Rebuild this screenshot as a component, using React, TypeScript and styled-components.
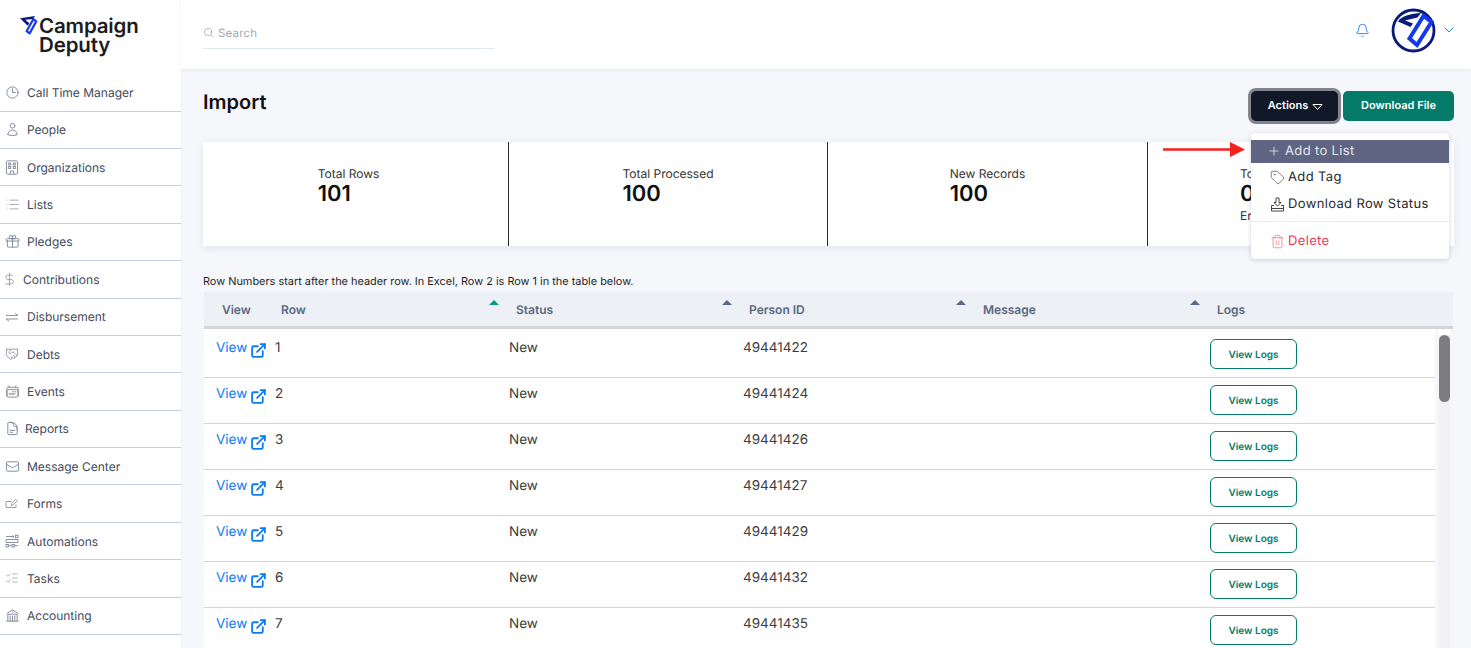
import React from "react";
import styled, { createGlobalStyle } from "styled-components";
import {
  List, DollarSign, Handshake, ListChecks, Search, Bell, ChevronDown, Plus, Tag, Trash2, ExternalLink,
} from "lucide-react";
import {
  HiOutlineClock, HiOutlineUser, HiOutlineGift, HiOutlineCalendarDays, HiOutlineDocumentText,
  HiOutlineEnvelope, HiOutlineBuildingLibrary,
} from "react-icons/hi2";

const Global = createGlobalStyle`
  html, body { margin: 0; padding: 0; height: 648px; overflow: hidden; background: #f6f7fb; }
  body { font-family: Inter, "Liberation Sans", sans-serif; color: #111827; text-rendering: geometricPrecision; }
  * { box-sizing: border-box; }
`;

const Shell = styled.div`display: flex; width: 1471px; height: 648px; overflow: hidden;`;
const Sidebar = styled.aside`width: 181px; flex: none; background: #fff; height: 648px; overflow: hidden; box-shadow: 1px 0 2px rgba(30,40,80,.04);`;
const Brand = styled.div`height: 74.2px; padding: 16px 0 0 19px; display: flex; gap: 1px; align-items: flex-start;`;
const BrandText = styled.div`font-size: 20.5px; line-height: 19px; font-weight: 600; color: #1c1c22; letter-spacing: -.15px;`;
const NavRow = styled.div<{ $gap?: number }>`
  height: 37.4px; border-bottom: 1px solid #c3d0dc; display: flex; align-items: center;
  padding-left: 5px; gap: ${p => p.$gap ?? 7}px;
  font-size: 12px; font-weight: 400; color: #3f4a5c;
  svg { flex: none; color: #7f8897; }
`;
const DollarIcon = styled(DollarSign)`margin-left: -3px;`;
const Main = styled.main`flex: 1; min-width: 0; display: flex; flex-direction: column; position: relative;`;
const Topbar = styled.header`height: 69px; flex: none; background: #fff; box-shadow: 0 1px 3px rgba(40,50,90,.07); display: flex; align-items: flex-start; justify-content: space-between; padding-right: 14px; position: relative; z-index: 1;`;
const SearchBox = styled.div`margin: 24px 0 0 22px; width: 291px; height: 25px; border-bottom: 1px solid #e1e7f0; display: flex; align-items: center; gap: 4px; padding-bottom: 7px; font-size: 11.5px; color: #a4a8b0; letter-spacing: .2px; svg { color: #8d96a3; }`;
const TopRight = styled.div`display: flex; align-items: center; height: 60px; svg { color: #2b7fef; }`;
const Avatar = styled.svg`width: 45px; height: 45px; margin: 0 5px 0 21px;`;
const Content = styled.div`padding: 0 17px 0 22px; flex: 1; position: relative;`;
const TitleRow = styled.div`display: flex; justify-content: space-between; align-items: flex-start; height: 73px;`;
const Title = styled.h1`margin: 20px 0 0 0; font-size: 20px; line-height: 26px; font-weight: 600; color: #111; `;
const Buttons = styled.div`display: flex; gap: 5px; margin-top: 22px;`;
const DarkBtn = styled.button`height: 30px; width: 87px; border: 0; padding: 0 0 2px 2px; border-radius: 5px; background: #111827; color: #fff; font: 600 11px Inter, sans-serif; text-rendering: geometricPrecision; box-shadow: 0 0 0 3px #82858e; display: flex; align-items: center; justify-content: center; gap: 4px; margin-left: 2px; svg { margin-top: 4px; }`;
const GreenBtn = styled.button`height: 30px; width: 111px; border: 0; padding: 0 0 2px; border-radius: 5px; background: #047a69; color: #fff; font: 600 11px Inter, sans-serif; text-rendering: geometricPrecision;`;
const Stats = styled.section`display: grid; grid-template-columns: 306px 319px 320px 306px; height: 104px; background: #fff; box-shadow: 0 2px 8px rgba(40,50,90,.1);`;
const Stat = styled.div<{ $edge?: boolean }>`display: flex; justify-content: center; padding-top: 24px; border-right: ${p => (p.$edge ? "0" : "1px solid #2b2b2b")};`;
const StatInner = styled.div<{ $shift: number }>`transform: translateX(${p => p.$shift}px);`;
const StatLabel = styled.div`font-size: 12px; line-height: 15px; color: #333;`;
const StatValue = styled.div`font-size: 22px; line-height: 26px; font-weight: 600; color: #111;`;
const StatFoot = styled.div`font-size: 12px; line-height: 17px; color: #333;`;
const Note = styled.p`margin: 28px 0 3px 0; font-size: 10.92px; line-height: 15px; color: #1f1f1f;`;
const TableWrap = styled.div`margin-left: 1px; width: 1249px;`;
const Head = styled.div`height: 37px; background: #edf1f6; border-bottom: 3px solid #d5d5d5; display: grid; grid-template-columns: 59px 234px 233px 234px 234px 1fr; align-items: center; font-size: 12px; font-weight: 600; color: #5a6880;`;
const HeadCell = styled.div<{ $tight?: boolean }>`padding-left: ${p => (p.$tight ? "18px" : "19px")}; position: relative;`;
const Sort = styled.span<{ $on?: boolean }>`position: absolute; right: -2px; top: -2px; width: 0; height: 0; border-left: 5px solid transparent; border-right: 5px solid transparent; border-bottom: 5px solid ${p => (p.$on ? "#0b9a83" : "#5a6880")};`;
const BodyWrap = styled.div`display: flex; position: relative; height: 400px; overflow: hidden;`;
const Rows = styled.div`width: 1231px; flex: none; padding-top: 3px; background: #fff;`;
const Row = styled.div`height: 46px; border-bottom: 1px solid #d5d5d5; display: grid; grid-template-columns: 59px 234px 234px 467px 1fr; font-size: 13.5px; color: #3c3c3c; padding-left: 12px; padding-top: 7px; background: #fff;`;
const ViewLink = styled.a`color: #0d7cf2; font-size: 13.5px; display: flex; align-items: flex-start; gap: 3px; margin-top: 1px; line-height: 17px; svg { margin-top: 2px; flex: none; }`;
const Cell = styled.div`line-height: 17px; margin-top: 1px;`;
const LogBtn = styled.button`width: 87px; height: 30px; padding: 1px 0 0; border: 1px solid #047a69; border-radius: 6px; background: #fff; color: #047a69; font: 600 10px Inter, sans-serif; text-rendering: geometricPrecision;`;
const Track = styled.div`margin: 0 0 0 4px; width: 11px; background: linear-gradient(#fff 6px, #f1f1f1 6px);`;
const Thumb = styled.div`margin-top: 6px; width: 11px; height: 67px; border-radius: 6px; background: #7d7d7d;`;
const Menu = styled.div`position: absolute; left: 1070px; top: 64px; width: 198px; height: 126px; background: #fff; border-radius: 4px; box-shadow: 0 1px 5px rgba(40,60,110,.22); padding-top: 7px; font-size: 13px; letter-spacing: .35px; color: #2a2a2a; z-index: 3;`;
const MenuItem = styled.div<{ $active?: boolean; $danger?: boolean }>`height: ${p => (p.$active ? "22.5px" : "27px")}; margin-bottom: ${p => (p.$active ? "1px" : "0")}; display: flex; align-items: center; gap: 3px; padding-left: 19px; background: ${p => (p.$active ? "#5f6483" : "transparent")}; color: ${p => (p.$active ? "#e4e6ec" : p.$danger ? "#e63a56" : "#2a2a2a")}; svg { flex: none; color: ${p => (p.$active ? "#e4e6ec" : p.$danger ? "#ea6a7e" : "#444")}; }`;
const PlusIcon = styled(Plus)`margin: 0 1px 0 -3px;`;
const MenuRule = styled.div`height: 1.5px; background: #e5e9f0; margin: 3px 0 5.5px;`;
const RedArrow = styled.svg`position: absolute; left: 982px; top: 73px; width: 82px; height: 15px;`;

const OrgIcon = () => (
  <svg width="14" height="15" viewBox="0 0 14 15" fill="none" stroke="currentColor" strokeWidth=".9">
    <rect x="1.500" y=".8" width="11" height="13.400" rx="1.200" />
    <rect x="3.700" y="3" width="2" height="2" /><rect x="8.300" y="3" width="2" height="2" />
    <rect x="3.700" y="6.500" width="2" height="2" /><rect x="8.300" y="6.500" width="2" height="2" />
    <path d="M5.300 14v-3h3.400v3" />
  </svg>
);
const SwapIcon = () => (
  <svg width="14" height="14" viewBox="0 0 14 14" fill="none" stroke="currentColor" strokeWidth=".9">
    <path d="M1 5.500h12L10 3.300" /><path d="M13 9H1l3 2.200" />
  </svg>
);
const FormIcon = () => (
  <svg width="14" height="14" viewBox="0 0 14 14" fill="none" stroke="currentColor" strokeWidth=".8">
    <path d="M7 4.500H1v6h10V7.500" /><path d="M6 8.500l.8-2 4-4.200 1.500 1.500-4 4.100z" />
  </svg>
);
const AutoIcon = () => (
  <svg width="14" height="14" viewBox="0 0 14 14" fill="none" stroke="currentColor" strokeWidth=".9">
    <path d="M1 2.500h8M7.500 1.300L9 2.500 7.500 3.700" /><rect x="10.500" y="1.300" width="2.400" height="2.400" /><path d="M13 5.500v3H1v-3z" />
    <rect x="1" y="10.500" width="2.400" height="2.400" /><path d="M3.500 11.700h3" /><rect x="7" y="10.500" width="2.400" height="2.400" /><path d="M10 11.700h3" />
  </svg>
);
const TrayDownIcon = () => (
  <svg width="15" height="15" viewBox="0 0 15 15" fill="none" stroke="currentColor" strokeWidth="1">
    <path d="M6 1h3v4.500h2L7.500 9.200 4 5.500h2z" /><path d="M4 8.500H1.500V14h12V8.500H11" /><path d="M1.500 11.500h12" />
  </svg>
);
const LogoMark = () => (
  <svg width="19" height="20" viewBox="0 0 18 20" fill="none">
    <path d="M.5 2.200 L15.500 0 L13.700 2.900 L5.800 3.800 L9.800 7.200 L8.200 9.800 Z" fill="#0a1a7a" />
    <path d="M13.800 3.200 L16.800 5.300 L10.100 17.400 L7.100 15.200 Z" stroke="#1438f0" strokeWidth="2.200" strokeLinejoin="round" />
  </svg>
);

const ic = { size: 15 };
const nav: [string, React.ReactNode, number?][] = [
  ["Call Time Manager", <HiOutlineClock {...ic} />],
  ["People", <HiOutlineUser {...ic} />],
  ["Organizations", <OrgIcon />, 8],
  ["Lists", <List size={15} strokeWidth={1.1} />],
  ["Pledges", <HiOutlineGift {...ic} />],
  ["Contributions", <DollarIcon size={15} strokeWidth={1.1} />, 6],
  ["Disbursement", <SwapIcon />, 8],
  ["Debts", <Handshake size={14} strokeWidth={1.3} />, 8],
  ["Events", <HiOutlineCalendarDays {...ic} />],
  ["Reports", <HiOutlineDocumentText {...ic} />, 5],
  ["Message Center", <HiOutlineEnvelope {...ic} />],
  ["Forms", <FormIcon />, 8],
  ["Automations", <AutoIcon />, 8],
  ["Tasks", <ListChecks size={14} strokeWidth={1.1} />, 8],
  ["Accounting", <HiOutlineBuildingLibrary {...ic} />],
];
const rows = [["1", "49441422"], ["2", "49441424"], ["3", "49441426"], ["4", "49441427"], ["5", "49441429"], ["6", "49441432"], ["7", "49441435"]];

export default function App() {
  return (
    <Shell>
      <Global />
      <Sidebar>
        <Brand>
          <LogoMark />
          <BrandText>Campaign<br />Deputy</BrandText>
        </Brand>
        {nav.map(([label, icon, gap]) => (
          <NavRow key={label} $gap={gap}>{icon}<span>{label}</span></NavRow>
        ))}
      </Sidebar>
      <Main>
        <Topbar>
          <SearchBox><Search size={11} strokeWidth={1.4} />Search</SearchBox>
          <TopRight>
            <Bell size={15} strokeWidth={1.5} />
            <Avatar viewBox="0 0 45 45">
              <circle cx="22.5" cy="22.5" r="20.500" fill="#fff" stroke="#0a1a7a" strokeWidth="2.800" />
              <path d="M7 13.500 C10 8, 20 5.500, 30 5 L26.500 9.500 L14 12.500 L22 15.500 L19.500 19 Z" fill="#0a1a7a" />
              <path d="M32.500 8 L40.500 14 L26 37 L18.500 30.500 Z" stroke="#1438f0" strokeWidth="4" strokeLinejoin="miter" fill="#fff" />
            </Avatar>
            <ChevronDown size={16} strokeWidth={1.5} />
          </TopRight>
        </Topbar>
        <Content>
          <TitleRow>
            <Title>Import</Title>
            <Buttons>
              <DarkBtn>Actions
                <svg width="11" height="8" viewBox="0 0 11 8" fill="none" stroke="#fff"><path d="M1 1.500h9L5.500 6.500z" /></svg>
              </DarkBtn>
              <GreenBtn>Download File</GreenBtn>
            </Buttons>
          </TitleRow>
          <Stats>
            <Stat><StatInner $shift={-7}><StatLabel>Total Rows</StatLabel><StatValue>101</StatValue></StatInner></Stat>
            <Stat><StatInner $shift={0}><StatLabel>Total Processed</StatLabel><StatValue>100</StatValue></StatInner></Stat>
            <Stat><StatInner $shift={0}><StatLabel>New Records</StatLabel><StatValue>100</StatValue></StatInner></Stat>
            <Stat $edge><StatInner $shift={-9}><StatLabel>Total Errors Found</StatLabel><StatValue>0</StatValue><StatFoot>Errors</StatFoot></StatInner></Stat>
          </Stats>
          <Note>Row Numbers start after the header row. In Excel, Row 2 is Row 1 in the table below.</Note>
          <TableWrap>
            <Head>
              <HeadCell $tight>View</HeadCell>
              <HeadCell $tight>Row<Sort $on /></HeadCell>
              <HeadCell>Status<Sort /></HeadCell>
              <HeadCell>Person ID<Sort /></HeadCell>
              <HeadCell>Message<Sort /></HeadCell>
              <HeadCell>Logs</HeadCell>
            </Head>
            <BodyWrap>
              <Rows>
                {rows.map(([n, id]) => (
                  <Row key={n}>
                    <ViewLink>View <ExternalLink size={17} strokeWidth={2.6} /></ViewLink>
                    <Cell>{n}</Cell>
                    <Cell>New</Cell>
                    <Cell>{id}</Cell>
                    <div><LogBtn>View Logs</LogBtn></div>
                  </Row>
                ))}
              </Rows>
              <Track><Thumb /></Track>
            </BodyWrap>
          </TableWrap>
          <Menu>
            <MenuItem $active><PlusIcon size={14} strokeWidth={1.4} />Add to List</MenuItem>
            <MenuItem><Tag size={15} strokeWidth={1.1} />Add Tag</MenuItem>
            <MenuItem><TrayDownIcon />Download Row Status</MenuItem>
            <MenuRule />
            <MenuItem $danger><Trash2 size={15} strokeWidth={1.1} />Delete</MenuItem>
          </Menu>
          <RedArrow viewBox="0 0 82 15"><path d="M0 6.200h67V0l15 7.500L67 15V8.800H0z" fill="#f4211c" /></RedArrow>
        </Content>
      </Main>
    </Shell>
  );
}
